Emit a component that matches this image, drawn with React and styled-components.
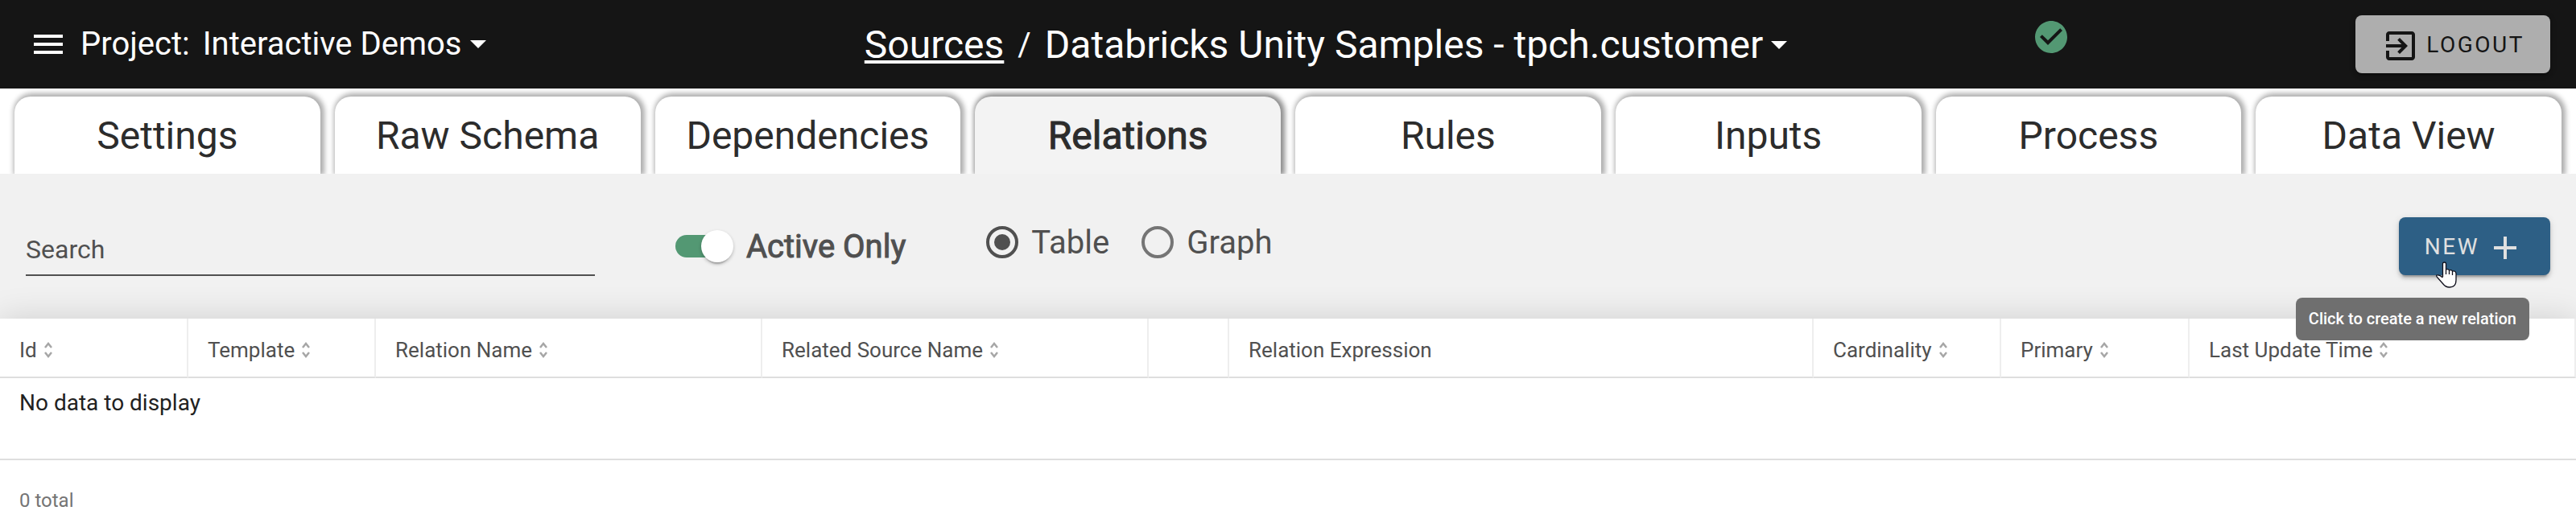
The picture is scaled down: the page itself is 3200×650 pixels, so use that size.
import { useState } from 'react';
import styled, { createGlobalStyle, css } from 'styled-components';

const GlobalStyle = createGlobalStyle`
  * {
    box-sizing: border-box;
  }

  body {
    margin: 0;
    background: #ffffff;
    color: #212121;
    font-family: Roboto, "Liberation Sans", sans-serif;
  }
`;

const bare = css`
  border: 0;
  padding: 0;
  background: none;
  color: inherit;
  font: inherit;
  cursor: pointer;
`;

const Header = styled.header`
  display: grid;
  grid-template-columns: 1fr auto 1fr;
  align-items: center;
  height: 110px;
  padding: 0 32px 0 36px;
  background: #151515;
  color: #ffffff;
`;

const HeaderLeft = styled.div`
  display: flex;
  align-items: center;
  font-size: 40px;
  line-height: 48px;
`;

const HeaderRight = styled.div`
  display: flex;
  align-items: center;
  justify-content: space-between;
  padding-left: 304px;
`;

const MenuButton = styled.button`
  ${bare}
  display: flex;
  margin-right: 16px;
`;

const ProjectLabel = styled.span`
  margin-right: 16px;
`;

const Picker = styled.button`
  ${bare}
  display: flex;
  align-items: center;
  gap: 10px;
`;

const Caret = styled.span`
  border: 10px solid transparent;
  border-top-color: #ffffff;
  border-bottom: 0;
`;

const Breadcrumb = styled.nav`
  display: flex;
  align-items: center;
  padding: 2px 0 0 90px;
  font-size: 48px;
  line-height: 56px;
`;

const SourcesLink = styled.a`
  color: inherit;
`;

const Slash = styled.span`
  margin: 0 17px;
  font-size: 40px;
`;

const Status = styled.span`
  display: flex;
  padding-bottom: 18px;
`;

const Button = styled.button`
  ${bare}
  display: flex;
  align-items: center;
  gap: 8px;
  height: 72px;
  padding: 0 32px;
  border-radius: 8px;
  background: ${({ $primary }) => ($primary ? '#2d5f85' : '#aeaeae')};
  color: ${({ $primary }) => ($primary ? '#e0e0e0' : '#151515')};
  font-size: 28px;
  letter-spacing: 0.09em;
  box-shadow: 0 6px 2px -4px rgba(0, 0, 0, 0.2), 0 4px 4px rgba(0, 0, 0, 0.14), 0 2px 10px rgba(0, 0, 0, 0.12);

  svg {
    margin-top: 4px;
  }
`;

const Tabs = styled.nav`
  display: grid;
  grid-template-columns: repeat(8, 1fr);
  gap: 18px;
  padding: 10px 18px 0;
  overflow: hidden;
`;

const Tab = styled.button`
  ${bare}
  height: 96px;
  border-radius: 20px 20px 0 0;
  background: ${({ $active }) => ($active ? '#f3f3f3' : '#ffffff')};
  box-shadow: 2px -1px 6px 3px ${({ $active }) => ($active ? '#8c8c8c' : '#adadad')};
  color: #2c2c2c;
  font-size: 48px;
  -webkit-text-stroke: ${({ $active }) => ($active ? '1px' : '0')};
`;

const Toolbar = styled.section`
  display: flex;
  align-items: flex-start;
  height: 180px;
  padding: 54px 32px 0;
  background: #f1f1f1;
  color: #505050;
`;

const SearchInput = styled.input`
  width: 707px;
  height: 73px;
  margin-right: 100px;
  padding: 8px 0 0;
  border: 0;
  border-bottom: 2px solid #505050;
  background: none;
  color: inherit;
  font: inherit;
  font-size: 32px;

  &::placeholder {
    color: #505050;
    opacity: 1;
  }
`;

const Toggle = styled.label`
  display: flex;
  align-items: center;
  gap: 16px;
  height: 72px;
  margin-right: 100px;
  font-size: 40px;
  -webkit-text-stroke: 1px;
`;

const Switch = styled.input`
  appearance: none;
  display: flex;
  align-items: center;
  width: 72px;
  height: 28px;
  margin: 0;
  border-radius: 14px;
  background: linear-gradient(90deg, #539873 56px, transparent 56px);

  &::before {
    content: '';
    width: 40px;
    height: 40px;
    margin-left: 32px;
    border-radius: 50%;
    background: #ffffff;
    box-shadow: 0 6px 2px -4px rgba(0, 0, 0, 0.2), 0 2px 4px rgba(0, 0, 0, 0.24);
  }

  &:not(:checked)::before {
    margin-left: 0;
  }
`;

const Choice = styled.label`
  display: flex;
  align-items: center;
  gap: 16px;
  height: 62px;
  margin-right: 40px;
  font-size: 40px;
`;

const Radio = styled.input`
  appearance: none;
  display: grid;
  place-content: center;
  width: 40px;
  height: 40px;
  margin: 0;
  border: 4px solid #757575;
  border-radius: 50%;

  &:checked {
    border-color: #505050;
  }

  &:checked::before {
    content: '';
    width: 20px;
    height: 20px;
    border-radius: 50%;
    background: #505050;
  }
`;

const NewWrap = styled.div`
  position: relative;
  margin-left: auto;
`;

const Tooltip = styled.div`
  position: absolute;
  z-index: 1;
  top: 100px;
  right: 26px;
  padding: 12px 16px;
  border-radius: 8px;
  background: #6f6f6f;
  color: #ffffff;
  font-size: 20px;
  font-weight: 500;
  line-height: 29px;
  white-space: nowrap;
`;

const Pointer = styled.svg`
  position: absolute;
  z-index: 2;
  top: 55px;
  left: 46px;
`;

const TableCard = styled.section`
  position: relative;
  background: #ffffff;
  box-shadow: 0 10px 10px -6px rgba(0, 0, 0, 0.1), 0 0 40px rgba(0, 0, 0, 0.14);
`;

const Table = styled.table`
  width: 100%;
  table-layout: fixed;
  border-collapse: separate;
  border-spacing: 0;
`;

const HeadCell = styled.th`
  width: ${({ $width }) => $width};
  height: 74px;
  padding: 6px 24px 0;
  border-right: 2px solid #eeeeee;
  border-bottom: 2px solid #dedede;
  color: #505050;
  font-size: 26px;
  font-weight: 400;
  text-align: left;
  white-space: nowrap;
`;

const SortButton = styled.button`
  ${bare}
  display: flex;
  align-items: center;
  gap: 9px;
`;

const EmptyCell = styled.td`
  height: 102px;
  padding: 15px 24px;
  border-bottom: 2px solid #dedede;
  font-size: 28px;
  line-height: 32px;
  vertical-align: top;
`;

const Footer = styled.footer`
  padding: 34px 24px;
  color: #757575;
  font-size: 24px;
  line-height: 32px;
`;

const tabs = ['Settings', 'Raw Schema', 'Dependencies', 'Relations', 'Rules', 'Inputs', 'Process', 'Data View'];

const columns = [
  { name: 'Id', width: '234px', sortable: true },
  { name: 'Template', width: '233px', sortable: true },
  { name: 'Relation Name', width: '15%', sortable: true },
  { name: 'Related Source Name', width: '15%', sortable: true },
  { name: '', width: '100px' },
  { name: 'Relation Expression' },
  { name: 'Cardinality', width: '233px', sortable: true },
  { name: 'Primary', width: '234px', sortable: true },
  { name: 'Last Update Time', width: '15%', sortable: true },
];

function Icon({ path, color = 'currentColor' }) {
  return (
    <svg width="48" height="48" viewBox="0 0 24 24" fill={color} aria-hidden="true">
      <path d={path} />
    </svg>
  );
}

function SortIcon() {
  return (
    <svg width="10" height="20" viewBox="0 0 10 20" fill="none" stroke="#a6a6a6" strokeWidth="2.500" aria-hidden="true">
      <path d="M1 7 5 2l4 5M1 13l4 5 4-5" />
    </svg>
  );
}

function App() {
  const [active, setActive] = useState('Relations');
  const [view, setView] = useState('Table');

  return (
    <>
      <GlobalStyle />
      <Header>
        <HeaderLeft>
          <MenuButton aria-label="Menu">
            <Icon path="M3 18h18v-2H3v2zm0-5h18v-2H3v2zm0-7v2h18V6H3z" />
          </MenuButton>
          <ProjectLabel>Project:</ProjectLabel>
          <Picker>
            Interactive Demos
            <Caret />
          </Picker>
        </HeaderLeft>
        <Breadcrumb>
          <SourcesLink href="#sources">Sources</SourcesLink>
          <Slash>/</Slash>
          <Picker>
            Databricks Unity Samples - tpch.customer
            <Caret />
          </Picker>
        </Breadcrumb>
        <HeaderRight>
          <Status>
            <Icon
              color="#539873"
              path="M12 2C6.48 2 2 6.48 2 12s4.48 10 10 10 10-4.48 10-10S17.52 2 12 2zm-2 15l-5-5 1.410-1.410L10 14.170l7.590-7.590L19 8l-9 9z"
            />
          </Status>
          <Button>
            <Icon path="M10.090 15.590L11.500 17l5-5-5-5-1.410 1.410L12.670 11H3v2h9.670l-2.580 2.590zM19 3H5c-1.110 0-2 .9-2 2v4h2V5h14v14H5v-4H3v4c0 1.100.890 2 2 2h14c1.100 0 2-.9 2-2V5c0-1.100-.9-2-2-2z" />
            LOGOUT
          </Button>
        </HeaderRight>
      </Header>

      <Tabs>
        {tabs.map((tab) => (
          <Tab key={tab} $active={tab === active} onClick={() => setActive(tab)}>
            {tab}
          </Tab>
        ))}
      </Tabs>

      <Toolbar>
        <SearchInput placeholder="Search" aria-label="Search" />
        <Toggle>
          <Switch type="checkbox" role="switch" defaultChecked />
          Active Only
        </Toggle>
        {['Table', 'Graph'].map((name) => (
          <Choice key={name}>
            <Radio type="radio" name="view" checked={view === name} onChange={() => setView(name)} />
            {name}
          </Choice>
        ))}
        <NewWrap>
          <Button $primary aria-describedby="new-tip">
            NEW
            <Icon path="M19 13h-6v6h-2v-6H5v-2h6V5h2v6h6v2z" />
          </Button>
          <Pointer width="26" height="33" viewBox="0 0 26 33" fill="#ffffff" stroke="#10101c" strokeWidth="1.300">
            <path d="M8.500 19V3q0-2 2-2t2 2v7q3-1 4 1 3-1 4 1 4-1 4.500 3v8q0 9-8 9-5 0-8-4L2 20q-2-2-1-3 3-1 7.500 3M12.500 9v7M16.500 11v5M20.500 12v5" />
          </Pointer>
          <Tooltip role="tooltip" id="new-tip">Click to create a new relation</Tooltip>
        </NewWrap>
      </Toolbar>

      <TableCard>
        <Table>
          <thead>
            <tr>
              {columns.map(({ name, width, sortable }) => (
                <HeadCell key={name} $width={width}>
                  {sortable ? (
                    <SortButton>
                      {name}
                      <SortIcon />
                    </SortButton>
                  ) : (
                    name
                  )}
                </HeadCell>
              ))}
            </tr>
          </thead>
          <tbody>
            <tr>
              <EmptyCell colSpan={columns.length}>No data to display</EmptyCell>
            </tr>
          </tbody>
        </Table>
        <Footer>0 total</Footer>
      </TableCard>
    </>
  );
}

export default App;
